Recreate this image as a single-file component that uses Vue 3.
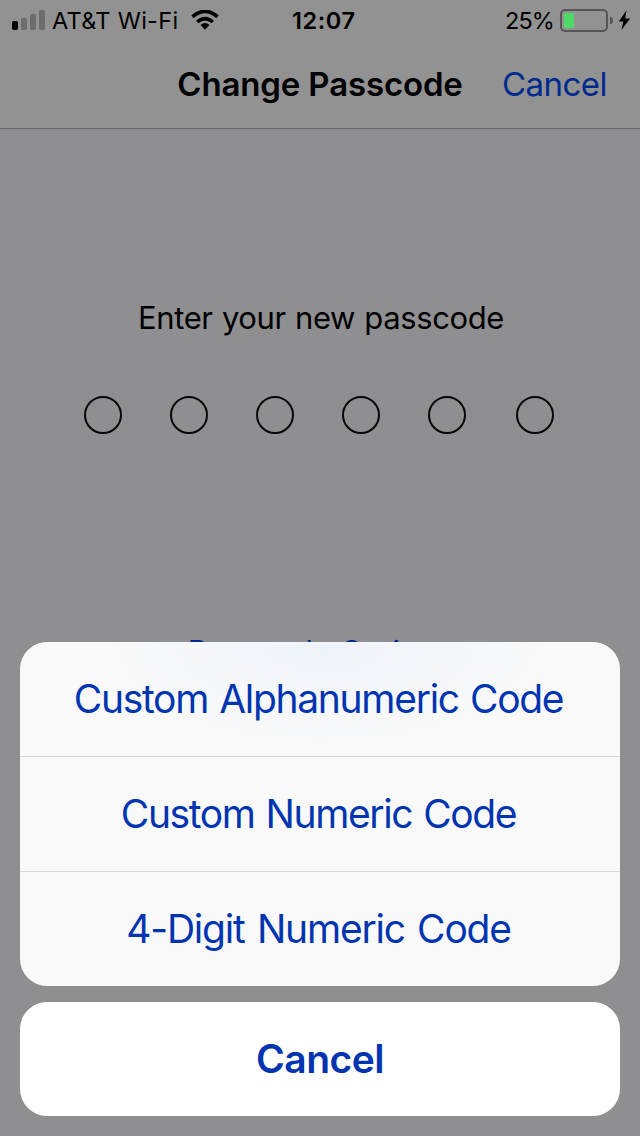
<script setup>
const options = ['Custom Alphanumeric Code', 'Custom Numeric Code', '4-Digit Numeric Code']
const optionClasses = ['alpha', 'numeric', 'digit']
</script>

<template>
  <main class="screen">
    <div class="top">
      <div class="status">
        <div class="left">
          <svg class="signal" width="33" height="20" viewBox="0 0 33 20">
            <rect x="0" y="11" width="6" height="9" rx="1.8" fill="#000" />
            <rect x="9" y="8" width="6" height="12" rx="1.8" fill="#6c6c6c" />
            <rect x="18" y="4" width="6" height="16" rx="1.8" fill="#6c6c6c" />
            <rect x="27" y="0" width="6" height="20" rx="1.8" fill="#6c6c6c" />
          </svg>
          <span class="carrier">AT&amp;T Wi-Fi</span>
          <svg class="wifi" width="28" height="20" viewBox="0 0 28 20">
            <path d="M1.5 6.8Q14 -4 26.5 6.8" fill="none" stroke="#000" stroke-width="3.8" />
            <path d="M6.2 12Q14 5.4 21.8 12" fill="none" stroke="#000" stroke-width="3.6" />
            <path d="M9.5 15Q14 11.2 18.5 15L14 19.8Z" fill="#000" />
          </svg>
        </div>
        <span class="time">12:07</span>
        <div class="right">
          <span class="percent">25%</span>
          <svg class="battery" width="71" height="24" viewBox="0 0 71 24">
            <rect x="1" y="1" width="46" height="21" rx="4" fill="none" stroke="#565656" stroke-width="2" />
            <rect x="4" y="4" width="10" height="15" rx="1" fill="#4cd964" />
            <path d="M50 7.5Q53 8.5 53 11.5T50 15.5Z" fill="#565656" />
            <path d="M66.5 1.3L58.8 12.6H63.4L61.4 21L70.2 9.6H65.2Z" fill="#000" />
          </svg>
        </div>
      </div>
      <header class="nav">
        <h1>Change Passcode</h1>
        <span class="nav-cancel">Cancel</span>
      </header>
    </div>

    <section class="entry">
      <p class="prompt">Enter your new passcode</p>
      <div class="dots">
        <i v-for="n in 6" :key="n" class="dot"></i>
      </div>
      <p class="options-link">Passcode Options</p>
    </section>

    <div class="sheet">
      <div class="group">
        <button v-for="(option, i) in options" :key="option" class="option">
          <span :class="optionClasses[i]">{{ option }}</span>
        </button>
      </div>
      <button class="cancel">Cancel</button>
    </div>
  </main>
</template>

<style>
body { margin: 0; background: #8f8f91; }
</style>

<style scoped>
* { box-sizing: border-box; }
.screen { position: relative; width: 640px; height: 1136px; overflow: hidden; background: #8f8f91; font-family: Inter, "Liberation Sans", sans-serif; color: #000; font-weight: 400; }
.top { height: 129px; background: #929292; border-bottom: 1px solid #68686a; }
.status { display: grid; grid-template-columns: 1fr 70px 1fr; height: 40px; font-size: 23.5px; line-height: 41px; white-space: nowrap; }
.left { display: flex; padding-left: 12px; }
.signal { margin-top: 10px; }
.carrier { width: 139px; margin-left: 7px; letter-spacing: 0.3px; }
.wifi { margin-top: 10px; }
.time { text-align: center; font-weight: 600; letter-spacing: 0.6px; margin-left: 7px; }
.right { display: flex; justify-content: flex-end; padding-right: 9px; }
.percent { margin-right: 6px; letter-spacing: -0.9px; }
.battery { margin-top: 9px; }
.nav { display: grid; grid-template-columns: 160px 320px 1fr; height: 88px; line-height: 88px; }
h1 { grid-column: 2; margin: 0; text-align: center; font-size: 33px; font-weight: 600; letter-spacing: -0.15px; white-space: nowrap; }
.nav-cancel { padding-left: 22px; font-size: 33px; color: #002a8f; letter-spacing: -0.55px; }
.entry { text-align: center; }
.prompt { margin: 169px 0 0; padding-left: 2px; height: 40px; line-height: 40px; font-size: 31px; letter-spacing: -0.4px; word-spacing: 1px; }
.dots { display: flex; gap: 48px; margin: 58px 0 0 84px; }
.dot { width: 38px; height: 38px; border: 2px solid #080808; border-radius: 50%; }
.dot:last-child { margin-left: 2px; }
.options-link { margin: 198px 0 0; padding-left: 1px; font-size: 31px; line-height: 40px; color: #002a8f; }
.sheet { position: absolute; left: 20px; right: 20px; top: 642px; display: flex; flex-direction: column; gap: 16px; }
.group { height: 344px; border-radius: 27px; overflow: hidden; background: radial-gradient(ellipse 230px 110px at 51% 0, #eff4fa, #f9f9f9 100%); }
button { display: block; width: 100%; margin: 0; padding: 0; border: 0; background: none; font-family: inherit; font-size: 39px; color: #0034b0; text-align: center; white-space: nowrap; }
.option { height: 115px; padding: 0 3px 1px 0; line-height: 113px; border-bottom: 1px solid #d7d7d9; }
.alpha { letter-spacing: -1.3px; word-spacing: 1.5px; }
.numeric { letter-spacing: -1.4px; word-spacing: 1.5px; }
.digit { letter-spacing: -1.2px; word-spacing: 2.5px; }
.option:last-child { height: 114px; border-bottom: 0; }
.cancel { height: 114px; padding-bottom: 1px; line-height: 113px; border-radius: 27px; background: #fff; font-weight: 600; letter-spacing: -0.5px; }
</style>
